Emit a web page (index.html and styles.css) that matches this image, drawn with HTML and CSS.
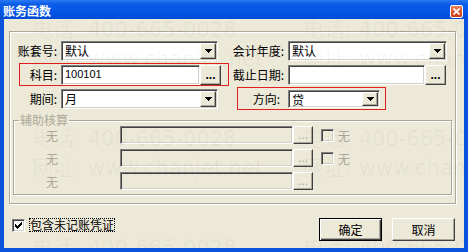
FILE: index.html
```html
<!DOCTYPE html>
<html lang="zh-CN">
<head>
  <meta charset="UTF-8">
  <title>账务函数</title>
  <link rel="stylesheet" href="styles.css">
</head>
<body>
  <div class="window">
    <div class="titlebar">
      <span class="title">账务函数</span>
      <span class="close">
        <svg width="7" height="7" viewBox="0 0 7 7"><path d="M0.5 0.5l6 6M6.5 0.5l-6 6" stroke="#fff" stroke-width="1.6"/></svg>
      </span>
    </div>

    <div class="client">
      <div class="panel">
        <div class="row">
          <label class="lbl">账套号:</label>
          <div class="combo sunken">
            <span class="val">默认</span>
            <span class="drop"><svg width="7" height="4" viewBox="0 0 7 4"><path d="M0 0h7v1H0zM1 1h5v1H1zM2 2h3v1H2zM3 3h1v1H3z"/></svg></span>
          </div>
          <label class="lbl">会计年度:</label>
          <div class="combo combo-year sunken">
            <span class="val">默认</span>
            <span class="drop"><svg width="7" height="4" viewBox="0 0 7 4"><path d="M0 0h7v1H0zM1 1h5v1H1zM2 2h3v1H2zM3 3h1v1H3z"/></svg></span>
          </div>
        </div>

        <div class="row">
          <div class="mark mark-subject">
            <label class="lbl">科目:</label>
            <div class="edit sunken">100101</div>
            <button class="more">...</button>
          </div>
          <label class="lbl">截止日期:</label>
          <div class="field">
            <div class="edit edit-date sunken"></div>
            <button class="more">...</button>
          </div>
        </div>

        <div class="row">
          <label class="lbl">期间:</label>
          <div class="combo sunken">
            <span class="val">月</span>
            <span class="drop"><svg width="7" height="4" viewBox="0 0 7 4"><path d="M0 0h7v1H0zM1 1h5v1H1zM2 2h3v1H2zM3 3h1v1H3z"/></svg></span>
          </div>
          <div class="mark mark-dir">
            <label class="lbl lbl-dir">方向:</label>
            <div class="combo combo-dir sunken">
              <span class="val">贷</span>
              <span class="drop"><svg width="7" height="4" viewBox="0 0 7 4"><path d="M0 0h7v1H0zM1 1h5v1H1zM2 2h3v1H2zM3 3h1v1H3z"/></svg></span>
            </div>
          </div>
        </div>

        <div class="group">
          <span class="group-title">辅助核算</span>
          <div class="aux-row">
            <span class="aux-lbl">无</span>
            <div class="edit aux-edit sunken"></div>
            <button class="more" disabled>...</button>
            <span class="cb cb-off sunken"></span>
            <span class="aux-text">无</span>
          </div>
          <div class="aux-row">
            <span class="aux-lbl">无</span>
            <div class="edit aux-edit sunken"></div>
            <button class="more" disabled>...</button>
            <span class="cb cb-off sunken"></span>
            <span class="aux-text">无</span>
          </div>
          <div class="aux-row">
            <span class="aux-lbl">无</span>
            <div class="edit aux-edit sunken"></div>
            <button class="more" disabled>...</button>
          </div>
        </div>
      </div>

      <div class="footer">
        <label class="check">
          <span class="cb sunken"><svg width="7" height="7" viewBox="0 0 7 7"><path d="M6 0h1v1H6zM5 1h2v1H5zM0 2h1v1H0zM4 2h3v1H4zM0 3h2v1H0zM3 3h3v1H3zM0 4h5v1H0zM1 5h3v1H1zM2 6h1v1H2z"/></svg></span>
          <span class="focus">包含未记账凭证</span>
        </label>
        <button class="btn btn-default">确定</button>
        <button class="btn">取消</button>
      </div>

      <!-- 水印 -->
      <div class="watermark">
        <div><p>电话: 400-665-0028</p><p>网址: www.chanjet.net</p></div>
        <div><p>电话: 400-665-0028</p><p>网址: www.chanjet.net</p></div>
        <div><p>电话: 400-665-0028</p><p>网址: www.chanjet.net</p></div>
        <div><p>电话: 400-665-0028</p><p>网址: www.chanjet.net</p></div>
        <div><p>电话: 400-665-0028</p><p>网址: www.chanjet.net</p></div>
        <div><p>电话: 400-665-0028</p><p>网址: www.chanjet.net</p></div>
      </div>
    </div>
  </div>
</body>
</html>
```

FILE: styles.css
```css
/* 窗口 */
* {
  box-sizing: border-box;
}
body {
  margin: 0;
  font-family: "Noto Sans CJK SC", sans-serif;
  font-size: 12px;
  color: #000;
}
.window {
  width: 468px;
  height: 252px;
  display: flex;
  flex-direction: column;
  background: #0b52dc;
}
.titlebar {
  height: 19px;
  display: flex;
  align-items: center;
  padding: 0 5px 0 3px;
  background: linear-gradient(#2a7af4, #0c5ce8 4px, #0055e4 13px, #024bd6);
}
.title {
  flex: 1;
  color: #fff;
  font-weight: bold;
  line-height: 14px;
  padding-top: 3px;
}
.close {
  width: 13px;
  height: 13px;
  margin-top: 3px;
  display: flex;
  align-items: center;
  justify-content: center;
  border: 1px solid #fff;
  border-radius: 2px;
  background: linear-gradient(#e98260, #d9502a 60%, #c63d17);
}
.client {
  position: relative;
  flex: 1;
  margin: 0 4px 4px;
  padding: 12px 8px 0 5px;
  background: #ece9d8;
  overflow: hidden;
}

/* 面板 */
.panel {
  border: 1px solid #aca899;
  box-shadow: inset 1px 1px #fff, 1px 1px #fff;
  padding: 9px 0 8px;
}
.row {
  display: grid;
  grid-template-columns: 51px 160px 67px 1fr;
  align-items: center;
  height: 20px;
  margin-bottom: 4px;
}
.lbl {
  text-align: right;
  padding-right: 4px;
  line-height: 16px;
  white-space: nowrap;
}
.sunken {
  border: 1px solid;
  border-color: #808080 #fff #fff #808080;
  box-shadow: inset 1px 1px #404040, inset -1px -1px #d4d0c8;
}
.combo {
  width: 157px;
  height: 20px;
  display: flex;
  padding: 1px;
  background: #fff;
}
.combo-year {
  width: 159px;
}
.val {
  flex: 1;
  line-height: 16px;
  padding-left: 2px;
}
.drop {
  width: 16px;
  height: 16px;
  display: flex;
  align-items: center;
  justify-content: center;
  background: #ece9d8;
  border: 1px solid;
  border-color: #fff #404040 #404040 #fff;
  box-shadow: inset -1px -1px #aca899;
}
.edit {
  flex: none;
  width: 139px;
  height: 20px;
  padding-left: 3px;
  background: #fff;
  font-family: "Liberation Sans", sans-serif;
  font-size: 11px;
  line-height: 17px;
}
.edit-date {
  width: 137px;
}
.field {
  display: flex;
}
.more {
  flex: none;
  width: 21px;
  height: 20px;
  padding: 0;
  margin: 0;
  background: #ece9d8;
  border: 1px solid;
  border-color: #fff #404040 #404040 #fff;
  box-shadow: inset -1px -1px #aca899;
  font-family: "Liberation Sans", sans-serif;
  font-size: 12px;
  font-weight: bold;
  line-height: 14px;
  color: #000;
}
.more:disabled {
  color: #aca899;
  font-weight: normal;
}

/* 红框标注 */
.mark {
  position: relative;
  display: flex;
  align-items: center;
}
.mark::after {
  content: "";
  position: absolute;
  border: 1px solid #e0201c;
}
.mark-subject {
  grid-column: 1 / 3;
}
.mark-subject .lbl {
  flex: none;
  width: 51px;
}
.mark-subject::after {
  left: 9px;
  right: -8px;
  top: -2px;
  bottom: -1px;
}
.mark-dir {
  grid-column: 3 / 5;
}
.mark-dir::after {
  left: 16px;
  top: -3px;
  bottom: -2px;
  width: 147px;
}
.lbl-dir {
  flex: none;
  width: 67px;
  padding-right: 8px;
}
.combo-dir {
  width: 92px;
  height: 18px;
}
.combo-dir .drop {
  height: 14px;
}

/* 辅助核算 */
.group {
  margin: 11px 3px 0 3px;
  border: 1px solid #aca899;
  box-shadow: inset 1px 1px #fff, 1px 1px #fff;
  padding-bottom: 4px;
}
.group-title {
  display: block;
  width: fit-content;
  margin: -7px 0 0 5px;
  padding: 0 1px;
  background: #ece9d8;
  color: #aca899;
  line-height: 12px;
}
.aux-row {
  display: flex;
  align-items: center;
  height: 18px;
  margin-bottom: 5px;
}
.aux-row:last-child {
  margin-bottom: 0;
}
.aux-lbl {
  width: 106px;
  padding-left: 32px;
  color: #aca899;
}
.aux-edit {
  width: 173px;
  height: 18px;
  background: #ece9d8;
}
.aux-row .more {
  width: 20px;
  height: 18px;
}
.cb {
  flex: none;
  width: 13px;
  height: 13px;
  display: flex;
  align-items: center;
  justify-content: center;
  background: #fff;
}
.cb-off {
  margin-left: 8px;
  background: #ece9d8;
}
.aux-text {
  margin-left: 4px;
  color: #aca899;
}

/* 底部 */
.footer {
  display: flex;
  align-items: flex-start;
  gap: 10px;
  margin-top: 14px;
  padding: 0 1px 0 3px;
}
.check {
  flex: 1;
  display: flex;
  align-items: center;
  gap: 4px;
}
.focus {
  border: 1px dotted #000;
  line-height: 12px;
}
.btn {
  width: 63px;
  height: 23px;
  padding: 0;
  background: #ece9d8;
  border: 1px solid;
  border-color: #fff #404040 #404040 #fff;
  box-shadow: inset -1px -1px #aca899;
  font-family: "Noto Sans CJK SC", sans-serif;
  font-size: 12px;
  color: #000;
}
.btn-default {
  border-color: #000;
  box-shadow: inset 1px 1px #fff, inset -1px -1px #404040, inset -2px -2px #aca899;
}

/* 水印 */
.watermark {
  position: absolute;
  top: -3px;
  left: 28px;
  display: grid;
  grid-template-columns: repeat(2, 271px);
  grid-auto-rows: 109px;
  pointer-events: none;
  white-space: nowrap;
  color: rgba(0, 0, 0, 0.04);
  font-family: "DejaVu Sans", "Noto Sans CJK SC", sans-serif;
  font-size: 21px;
  line-height: 29px;
}
.watermark p {
  margin: 0;
}
```
